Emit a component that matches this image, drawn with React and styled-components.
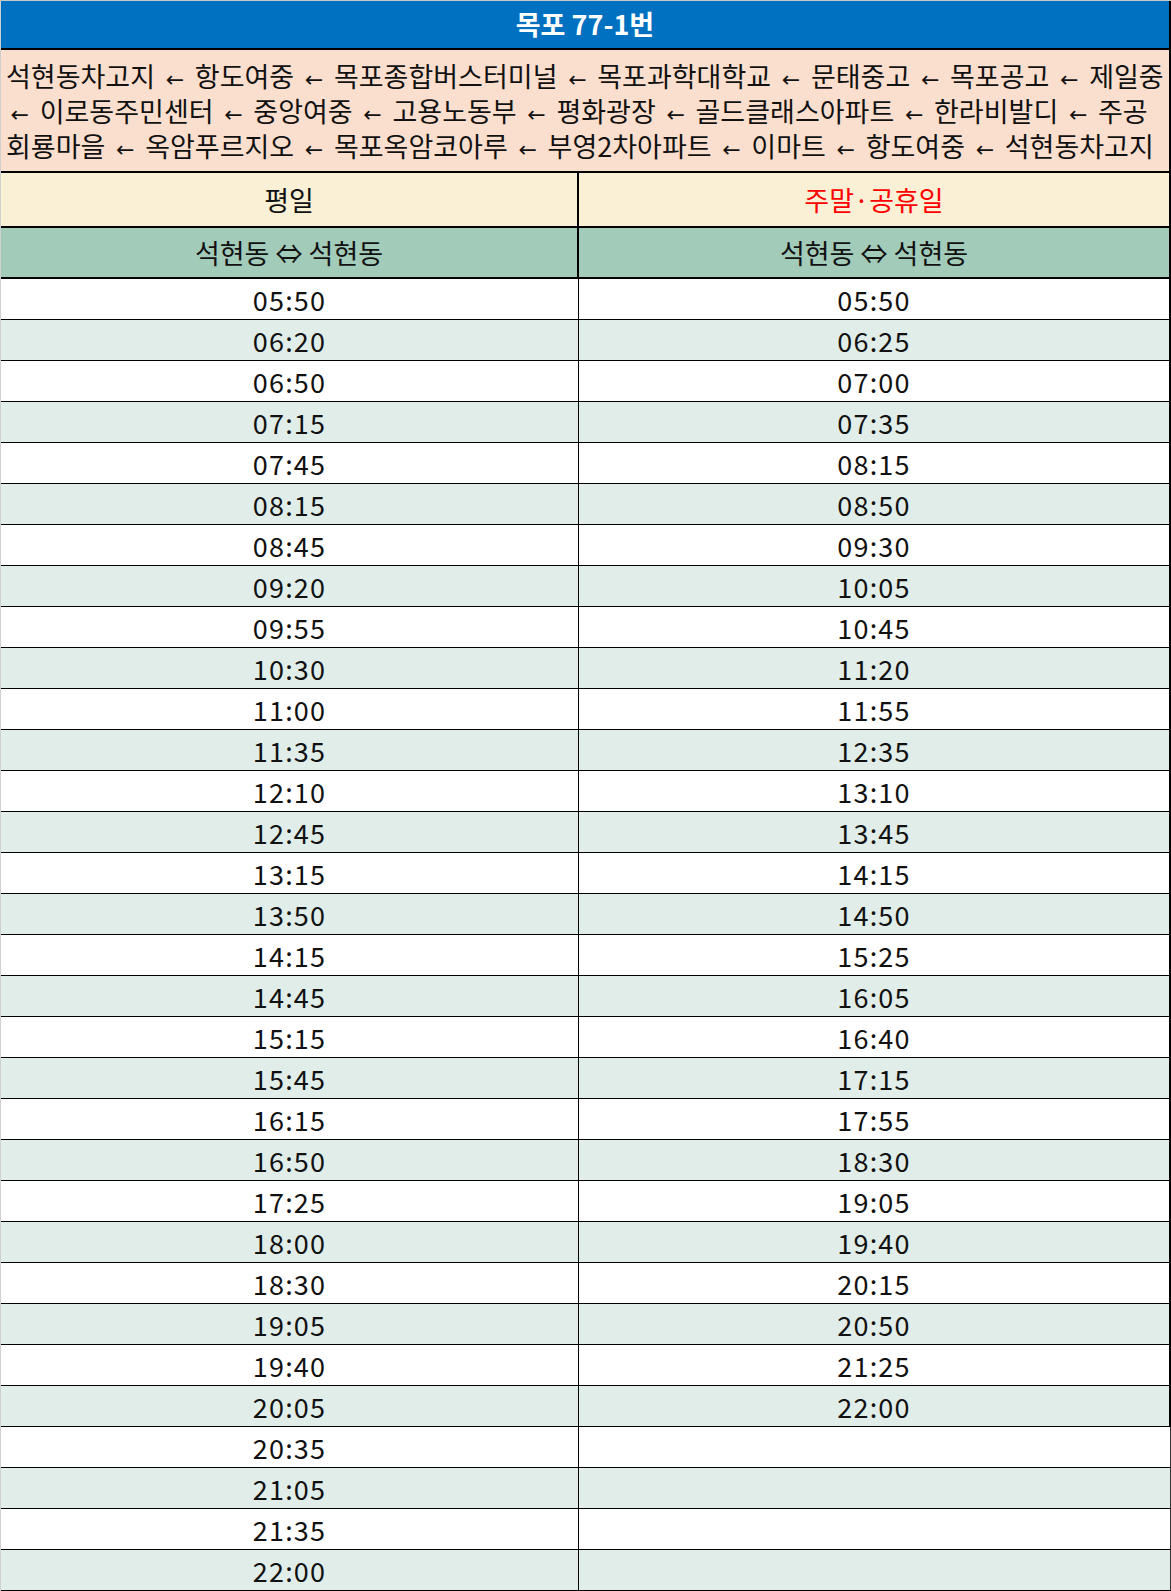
import React from 'react';
import styled, { createGlobalStyle } from 'styled-components';

const GlobalStyle = createGlobalStyle`
  html, body {
    margin: 0;
    padding: 0;
    background: #ffffff;
  }
  body {
    font-family: "Noto Sans CJK KR", "Noto Sans", sans-serif;
    color: #111;
  }
`;

const Sheet = styled.div`
  width: 1170px;
  border-top: 1px solid #c8c8c8;
  border-left: 1px solid #d0d0d0;
`;

const Title = styled.div`
  box-sizing: border-box;
  height: 49px;
  background-color: #0070c0;
  border-bottom: 2px solid #000;
  border-right: 2px solid #000;
  display: flex;
  align-items: center;
  justify-content: center;
  color: #fff;
  font-size: 27px;
  font-weight: 700;
  padding-bottom: 2px;
`;

const Route = styled.div`
  height: 123px;
  box-sizing: border-box;
  background-color: #fbdfce;
  border-bottom: 2px solid #000;
  border-right: 2px solid #000;
  padding: 8px 0 0 5px;
  display: flex;
  flex-direction: column;
`;

const RouteLine = styled.div`
  height: 35px;
  line-height: 35px;
  font-size: 27px;
  white-space: nowrap;
`;

const Arrow = styled.span`
  display: inline-block;
  line-height: 1;
  font-family: "DejaVu Sans", sans-serif;
  font-size: 22px;
  margin: 0 4.6px;
`;

const Row = styled.div`
  display: grid;
  grid-template-columns: 578px 592px;
  box-sizing: border-box;
  height: ${(p) => p.$height}px;
  background-color: ${(p) => p.$bg};
  border-bottom: ${(p) => p.$line}px solid #000;
`;

const Cell = styled.div`
  display: flex;
  align-items: center;
  justify-content: center;
  box-sizing: border-box;
  font-size: 27px;
  color: ${(p) => p.$color || '#111'};
  border-right: ${(p) => p.$edge};
`;

const Time = styled.span`
  font-size: 27px;
  letter-spacing: 1.2px;
`;

const routeLines = [
  ['석현동차고지', '항도여중', '목포종합버스터미널', '목포과학대학교', '문태중고', '목포공고', '제일중'],
  ['', '이로동주민센터', '중앙여중', '고용노동부', '평화광장', '골드클래스아파트', '한라비발디', '주공'],
  ['회룡마을', '옥암푸르지오', '목포옥암코아루', '부영2차아파트', '이마트', '항도여중', '석현동차고지'],
];

const weekday = [
  '05:50', '06:20', '06:50', '07:15', '07:45', '08:15', '08:45', '09:20',
  '09:55', '10:30', '11:00', '11:35', '12:10', '12:45', '13:15', '13:50',
  '14:15', '14:45', '15:15', '15:45', '16:15', '16:50', '17:25', '18:00',
  '18:30', '19:05', '19:40', '20:05', '20:35', '21:05', '21:35', '22:00',
];

const weekend = [
  '05:50', '06:25', '07:00', '07:35', '08:15', '08:50', '09:30', '10:05',
  '10:45', '11:20', '11:55', '12:35', '13:10', '13:45', '14:15', '14:50',
  '15:25', '16:05', '16:40', '17:15', '17:55', '18:30', '19:05', '19:40',
  '20:15', '20:50', '21:25', '22:00',
];

function RouteText({ stops }) {
  return (
    <RouteLine>
      {stops.map((s, i) => (
        <React.Fragment key={i}>
          {i > 0 && (
            <>
              {i > 1 || stops[0] ? ' ' : ''}
              <Arrow>←</Arrow>{' '}
            </>
          )}
          {s}
        </React.Fragment>
      ))}
    </RouteLine>
  );
}

export default function App() {
  return (
    <>
      <GlobalStyle />
      <Sheet>
        <Title>목포 77-1번</Title>
        <Route>
          {routeLines.map((stops, i) => (
            <RouteText key={i} stops={stops} />
          ))}
        </Route>
        <Row $height={55} $bg="#faf0d5" $line={2}>
          <Cell $edge="2px solid #000">평일</Cell>
          <Cell $edge="2px solid #000" $color="#ff0000">주말·공휴일</Cell>
        </Row>
        <Row $height={51} $bg="#a3cbb9" $line={2}>
          <Cell $edge="2px solid #000">석현동 ⇔ 석현동</Cell>
          <Cell $edge="2px solid #000">석현동 ⇔ 석현동</Cell>
        </Row>
        {weekday.map((t, i) => {
          const other = weekend[i];
          return (
            <Row key={t + i} $height={41} $bg={i % 2 ? '#e0ede9' : '#ffffff'} $line={1}>
              <Cell $edge="1px solid #000">
                <Time>{t}</Time>
              </Cell>
              <Cell $edge={other ? '2px solid #000' : '1px solid #333'}>
                {other && <Time>{other}</Time>}
              </Cell>
            </Row>
          );
        })}
      </Sheet>
    </>
  );
}
